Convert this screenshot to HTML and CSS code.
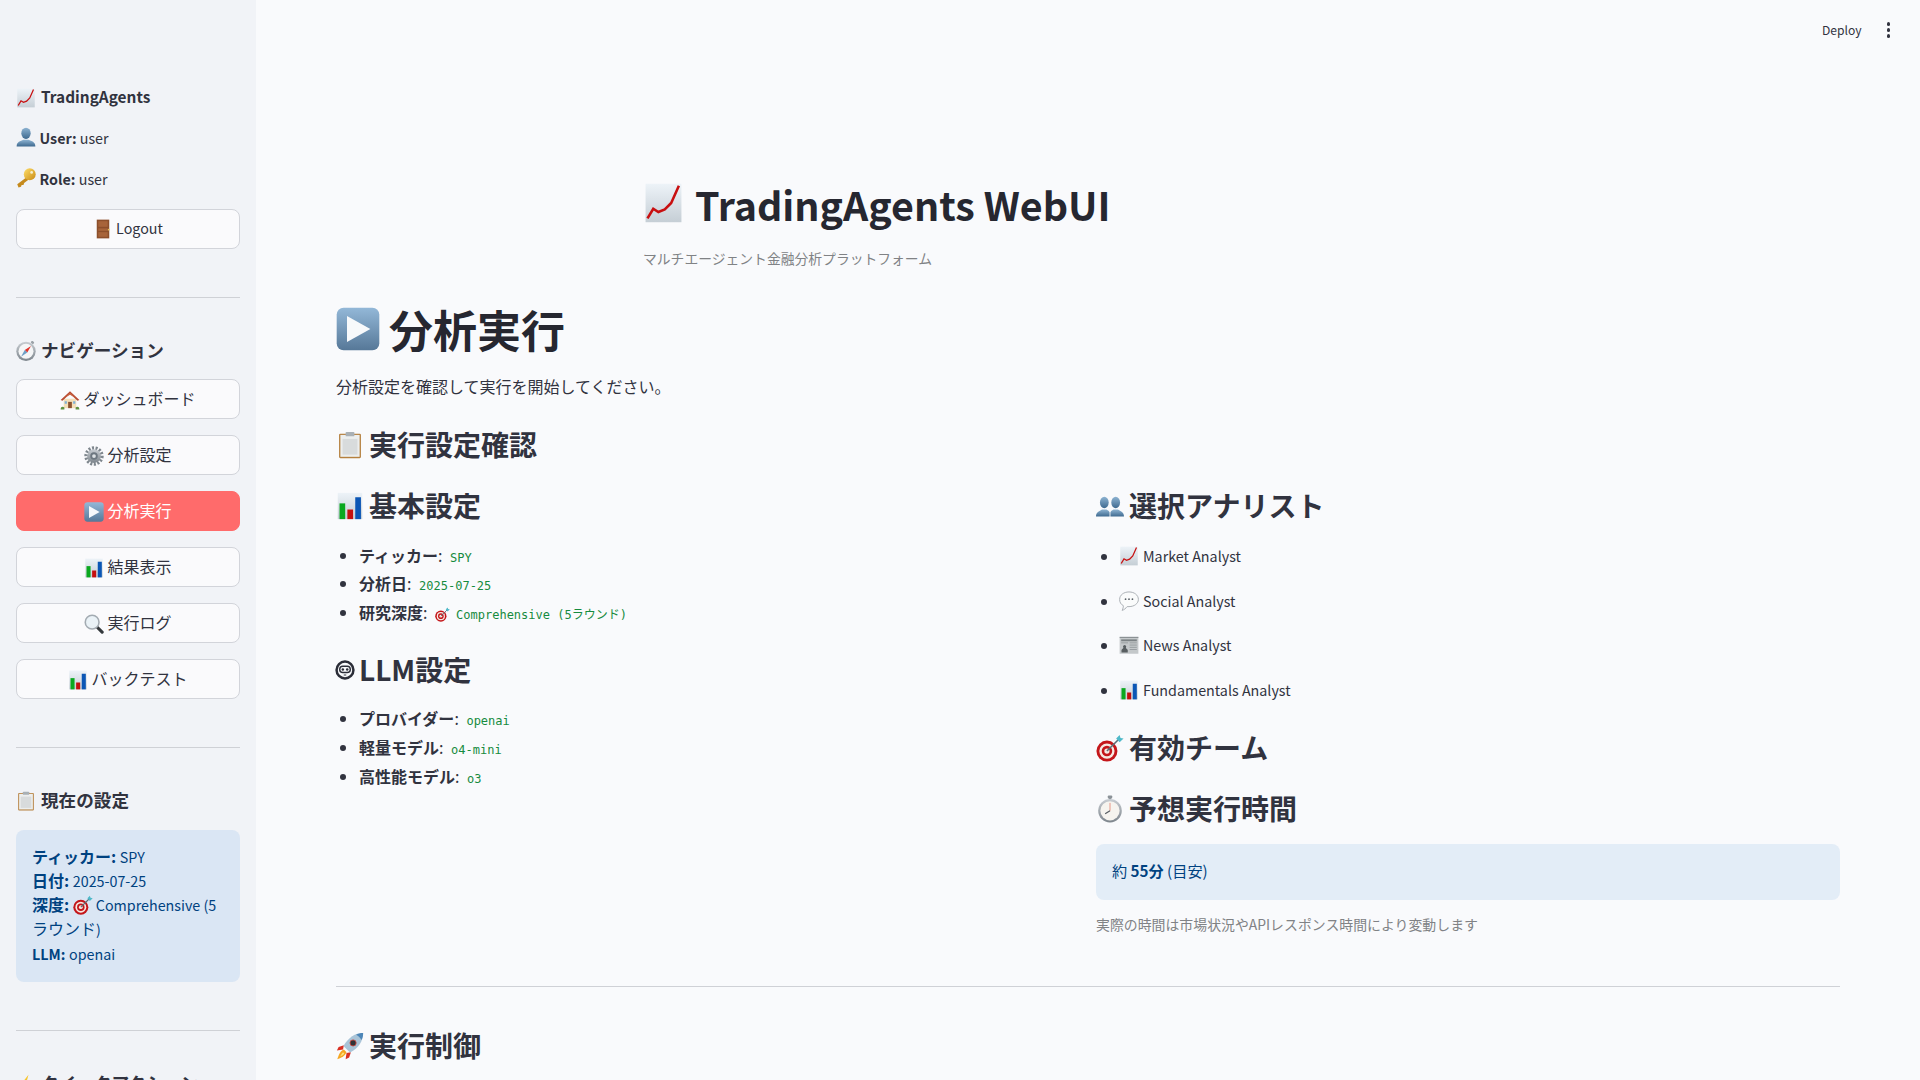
FILE: index.html
```html
<!doctype html>
<html lang="ja">
<head>
	<meta charset="UTF-8">
	<title>TradingAgents WebUI</title>
	<link rel="stylesheet" href="styles.css">
</head>
<body>
	<!-- emoji drawn once, reused with <use> -->
	<svg class="sprite" xmlns="http://www.w3.org/2000/svg">
		<defs>
			<linearGradient id="gPaper" x1="0" y1="0" x2="0" y2="1"><stop offset="0" stop-color="#edf3f8"/><stop offset="1" stop-color="#c5ced5"/></linearGradient>
			<linearGradient id="gBlue" x1="0" y1="0" x2="0" y2="1"><stop offset="0" stop-color="#93b8d8"/><stop offset="1" stop-color="#567898"/></linearGradient>
			<linearGradient id="gBust" x1="0" y1="0" x2="0" y2="1"><stop offset="0" stop-color="#8db3d2"/><stop offset="1" stop-color="#3f6a90"/></linearGradient>
			<linearGradient id="gGold" x1="0" y1="0" x2="1" y2="1"><stop offset="0" stop-color="#ffdf6a"/><stop offset="1" stop-color="#c98a14"/></linearGradient>
			<linearGradient id="gGrey" x1="0" y1="0" x2="0" y2="1"><stop offset="0" stop-color="#c9ced3"/><stop offset="1" stop-color="#7d858c"/></linearGradient>
			<symbol id="i-chart" viewBox="0 0 32 32">
				<rect x="2" y="1" width="28" height="30" fill="url(#gPaper)"/>
				<path d="M3.500 28 L8 20.500 L12 23 L17 21 L22 16 L28 2.500" fill="none" stroke="#c80f10" stroke-width="2"/>
			</symbol>
			<symbol id="i-bars" viewBox="0 0 32 32">
				<rect x="2" y="1" width="28" height="30" fill="url(#gPaper)"/>
				<rect x="4" y="13" width="6.500" height="18" fill="#0aa81f"/>
				<rect x="13" y="20" width="6.500" height="11" fill="#c4100f"/>
				<rect x="22" y="6" width="6.500" height="25" fill="#0b56b5"/>
			</symbol>
			<symbol id="i-user" viewBox="0 0 32 32">
				<ellipse cx="16" cy="10" rx="7.500" ry="9" fill="url(#gBust)"/>
				<path d="M1 31 C1 24 7 22.500 12 20.500 L20 20.500 C25 22.500 31 24 31 31 Z" fill="url(#gBust)"/>
			</symbol>
			<symbol id="i-users" viewBox="0 0 32 32">
				<ellipse cx="9.500" cy="12" rx="5" ry="6.500" fill="url(#gBust)"/>
				<path d="M0 28 C0 23 4 22 7 20 L12 20 C14 21 15 22 15.500 23 L15.500 28 Z" fill="url(#gBust)"/>
				<ellipse cx="22.500" cy="12" rx="5" ry="6.500" fill="url(#gBust)"/>
				<path d="M32 28 C32 23 28 22 25 20 L20 20 C18 21 17 22 16.500 23 L16.500 28 Z" fill="url(#gBust)"/>
			</symbol>
			<symbol id="i-key" viewBox="0 0 32 32">
				<path d="M19 13 L2 26 L4 31 L8 30 L9 27 L12 27 L13 24 L22 17 Z" fill="#c58a1d"/>
				<circle cx="22" cy="10" r="9.500" fill="url(#gGold)"/>
				<circle cx="25" cy="7" r="2.200" fill="#f6f0d0"/>
			</symbol>
			<symbol id="i-door" viewBox="0 0 32 32">
				<rect x="6" y="1" width="20" height="30" fill="#8c4f2b"/>
				<rect x="8.500" y="3.500" width="15" height="9" fill="#a7643a"/>
				<rect x="8.500" y="15" width="15" height="4" fill="#a7643a"/>
				<rect x="8.500" y="21" width="15" height="7.500" fill="#a7643a"/>
				<circle cx="25" cy="17" r="1.400" fill="#e4bd55"/>
			</symbol>
			<symbol id="i-compass" viewBox="0 0 32 32">
				<circle cx="16" cy="16.500" r="15.500" fill="url(#gGrey)"/>
				<circle cx="16" cy="16.500" r="12" fill="#f5f6f7"/>
				<rect x="24" y="0" width="5" height="4" rx="1.500" fill="#9aa1a7" transform="rotate(40 26 2)"/>
				<path d="M24 8 L18 18.500 L14 14.500 Z" fill="#e0332b"/>
				<path d="M8 25 L14 14.500 L18 18.500 Z" fill="#6f9fc6"/>
			</symbol>
			<symbol id="i-house" viewBox="0 0 32 32">
				<rect x="6" y="14" width="20" height="15" fill="#f3dfb9"/>
				<path d="M1 16 L16 2 L31 16 L28 17 L16 6 L4 17 Z" fill="#b5482f"/>
				<path d="M5 14 L16 4 L27 14 L16 7.500 Z" fill="#c8613f"/>
				<rect x="13" y="19" width="6" height="10" fill="#8c5430"/>
				<rect x="7.500" y="18" width="3.500" height="4" fill="#7fb1d6"/>
				<rect x="21" y="18" width="3.500" height="4" fill="#7fb1d6"/>
				<path d="M1 31 C1 26 5 26 7 28 L7 31 Z M31 31 C31 26 27 26 25 28 L25 31 Z" fill="#5f9140"/>
			</symbol>
			<symbol id="i-gear" viewBox="0 0 32 32">
				<circle cx="16" cy="16" r="12.500" fill="none" stroke="#7f878e" stroke-width="6" stroke-dasharray="3.200 2.340"/>
				<circle cx="16" cy="16" r="11" fill="url(#gGrey)"/>
				<circle cx="16" cy="16" r="6" fill="#6d7780"/>
				<circle cx="16" cy="16" r="3" fill="#dde1e4"/>
			</symbol>
			<symbol id="i-play" viewBox="0 0 32 32">
				<rect x="0.500" y="0.500" width="31" height="31" rx="5" fill="url(#gBlue)"/>
				<path d="M8 6.500 L25 16 L8 25.500 Z" fill="#f7f9fb"/>
			</symbol>
			<symbol id="i-search" viewBox="0 0 32 32">
				<path d="M20 20 L29 29" stroke="#33383c" stroke-width="5" stroke-linecap="round"/>
				<circle cx="13" cy="13" r="11" fill="#eaf2f7" stroke="#a3abb2" stroke-width="2.500"/>
			</symbol>
			<symbol id="i-clip" viewBox="0 0 32 32">
				<rect x="3.500" y="3" width="25" height="28" rx="1.500" fill="#b5803f"/>
				<rect x="5" y="4.500" width="22" height="25" fill="#eceeee"/>
				<rect x="7.500" y="9" width="17" height="18" fill="#d8dbdc"/>
				<rect x="11" y="1" width="10" height="5" rx="1" fill="#a9b0b5"/>
			</symbol>
			<symbol id="i-target" viewBox="0 0 32 32">
				<circle cx="12.500" cy="19.500" r="12" fill="#c4161a"/>
				<circle cx="12.500" cy="19.500" r="8.700" fill="#f6e9e2"/>
				<circle cx="12.500" cy="19.500" r="6" fill="#c4161a"/>
				<circle cx="12.500" cy="19.500" r="3" fill="#f6e9e2"/>
				<path d="M12.500 19.500 L26 6" stroke="#5d6d76" stroke-width="1.800"/>
				<path d="M23 5 L27 1 L28 4.500 L31.500 5 L27 9.500 Z" fill="#4fb9c9"/>
			</symbol>
			<symbol id="i-speech" viewBox="0 0 32 32">
				<path d="M16 1.500 C24.500 1.500 31 6.500 31 13.500 C31 20 24.500 25 16 25 L13 25 C11 27.500 8.500 30 5 31 C6.500 28 7 26 7 23.500 C3 21.500 1 18 1 13.500 C1 6.500 7.500 1.500 16 1.500 Z" fill="#fafbfb" stroke="#a6acb1" stroke-width="1.500"/>
				<circle cx="10.500" cy="13" r="1.400" fill="#596066"/>
				<circle cx="16" cy="13" r="1.400" fill="#596066"/>
				<circle cx="21.500" cy="13" r="1.400" fill="#596066"/>
			</symbol>
			<symbol id="i-news" viewBox="0 0 32 32">
				<rect x="1" y="3" width="30" height="27" fill="#c4c8ca"/>
				<rect x="1" y="3" width="30" height="1.500" fill="#7f8588"/>
				<rect x="3.500" y="7" width="25" height="3" fill="#7c8285"/>
				<rect x="3.500" y="12" width="11" height="1.200" fill="#8b9194"/>
				<rect x="17" y="12" width="11.500" height="1.200" fill="#8b9194"/>
				<rect x="17" y="15.500" width="11.500" height="1.200" fill="#8b9194"/>
				<rect x="17" y="19" width="11.500" height="1.200" fill="#8b9194"/>
				<rect x="17" y="22.500" width="11.500" height="1.200" fill="#8b9194"/>
				<path d="M4 28 L4 24 C5 22 7 22 7 20 A2.500 2.500 0 1 1 11 20 C11 22 13 22 14 24 L14 28 Z" fill="#585e61"/>
			</symbol>
			<symbol id="i-watch" viewBox="0 0 32 32">
				<rect x="13.500" y="0.500" width="5" height="3.500" rx="1" fill="#8b9298"/>
				<rect x="15" y="3" width="2" height="3" fill="#8b9298"/>
				<circle cx="16" cy="18" r="13.500" fill="url(#gGrey)"/>
				<circle cx="16" cy="18" r="11" fill="#f6f4ef"/>
				<path d="M16 18 L16 9" stroke="#e58a78" stroke-width="1"/>
				<path d="M16 18 L10.500 21.500" stroke="#555b60" stroke-width="1.300"/>
			</symbol>
			<symbol id="i-rocket" viewBox="0 0 32 32">
				<path d="M9 15 L3 17 L1 21 L8 20 Z" fill="#d92f22"/>
				<path d="M17 23 L15 29 L11 31 L12 24 Z" fill="#d92f22"/>
				<path d="M9 20 C4 22 3 27 1.500 31 C5.500 29.500 10 28 12 23 Z" fill="#f6a623"/>
				<path d="M8 23 C6 25 5.500 27 4.500 28 C6 27 8 27 9.500 24.500 Z" fill="#fde27a"/>
				<path d="M31 1 C22 1 14 6 8.500 16 L16 23.500 C26 18 31 10 31 1 Z" fill="#a9c4d8"/>
				<path d="M31 1 C28 1 25 1.500 23 3 C25.500 4 28 6.500 29 9 C30.500 7 31 4 31 1 Z" fill="#4d86b8"/>
				<circle cx="19.500" cy="12.500" r="3.500" fill="#2f3338" stroke="#c8423a" stroke-width="1"/>
			</symbol>
			<symbol id="i-bolt" viewBox="0 0 32 32">
				<path d="M20 1 L7 18 L14 18 L10 31 L25 12 L17 12 Z" fill="#f7c52d"/>
			</symbol>
			<symbol id="i-bot" viewBox="0 0 32 32">
				<circle cx="16" cy="16" r="13.500" fill="none" stroke="#2b2d38" stroke-width="4"/>
				<rect x="7.500" y="10" width="17" height="10" rx="5" fill="none" stroke="#2b2d38" stroke-width="2.200"/>
				<circle cx="12.500" cy="15" r="2" fill="#2b2d38"/>
				<circle cx="19.500" cy="15" r="2" fill="#2b2d38"/>
				<path d="M14 24 L18 24" stroke="#2b2d38" stroke-width="1.500"/>
			</symbol>
		</defs>
	</svg>

	<aside class="sidebar">
		<h3 class="side_title"><svg class="emoji"><use href="#i-chart"/></svg><span class="lat">TradingAgents</span></h3>
		<p class="side_line"><svg class="emoji"><use href="#i-user"/></svg><strong>User:</strong> user</p>
		<p class="side_line"><svg class="emoji"><use href="#i-key"/></svg><strong>Role:</strong> user</p>
		<button class="btn logout"><svg class="emoji"><use href="#i-door"/></svg><span class="lat">Logout</span></button>
		<hr class="side_rule first">

		<h3 class="side_title"><svg class="emoji"><use href="#i-compass"/></svg>ナビゲーション</h3>
		<div class="nav">
			<button class="btn"><svg class="emoji"><use href="#i-house"/></svg>ダッシュボード</button>
			<button class="btn"><svg class="emoji"><use href="#i-gear"/></svg>分析設定</button>
			<button class="btn active"><svg class="emoji"><use href="#i-play"/></svg>分析実行</button>
			<button class="btn"><svg class="emoji"><use href="#i-bars"/></svg>結果表示</button>
			<button class="btn"><svg class="emoji"><use href="#i-search"/></svg>実行ログ</button>
			<button class="btn"><svg class="emoji"><use href="#i-bars"/></svg>バックテスト</button>
		</div>
		<hr class="side_rule">

		<h3 class="side_title"><svg class="emoji"><use href="#i-clip"/></svg>現在の設定</h3>
		<div class="side_info">
			<strong>ティッカー:</strong> <span class="lat">SPY</span><br>
			<strong>日付:</strong> <span class="lat">2025-07-25</span><br>
			<strong>深度:</strong> <svg class="emoji"><use href="#i-target"/></svg><span class="lat">Comprehensive (5</span> ラウンド<span class="lat">)</span><br>
			<strong class="lat">LLM:</strong> <span class="lat">openai</span>
		</div>
		<hr class="side_rule">

		<h3 class="side_title quick"><svg class="emoji"><use href="#i-bolt"/></svg>クイックアクション</h3>
	</aside>

	<main class="main">
		<div class="topbar">
			<span class="deploy">Deploy</span>
			<span class="dots"><i></i><i></i><i></i></span>
		</div>
		<div class="content">
			<div class="brand">
				<h1 class="brand_title"><svg class="emoji"><use href="#i-chart"/></svg>TradingAgents WebUI</h1>
				<p class="brand_sub">マルチエージェント金融分析プラットフォーム</p>
			</div>

			<h1 class="page_title"><svg class="emoji"><use href="#i-play"/></svg>分析実行</h1>
			<p class="lead">分析設定を確認して実行を開始してください。</p>
			<h2 class="sec first"><svg class="emoji"><use href="#i-clip"/></svg>実行設定確認</h2>

			<div class="cols">
				<div class="col">
					<h2 class="sec"><svg class="emoji"><use href="#i-bars"/></svg>基本設定</h2>
					<ul class="list">
						<li><strong>ティッカー</strong>: <code>SPY</code></li>
						<li><strong>分析日</strong>: <code>2025-07-25</code></li>
						<li><strong>研究深度</strong>: <code><svg class="emoji"><use href="#i-target"/></svg>Comprehensive (5ラウンド)</code></li>
					</ul>
					<h2 class="sec llm"><svg class="emoji bot"><use href="#i-bot"/></svg>LLM設定</h2>
					<ul class="list second">
						<li><strong>プロバイダー</strong>: <code>openai</code></li>
						<li><strong>軽量モデル</strong>: <code>o4-mini</code></li>
						<li><strong>高性能モデル</strong>: <code>o3</code></li>
					</ul>
				</div>
				<div class="col">
					<h2 class="sec"><svg class="emoji"><use href="#i-users"/></svg>選択アナリスト</h2>
					<ul class="list wide">
						<li><svg class="emoji"><use href="#i-chart"/></svg>Market Analyst</li>
						<li><svg class="emoji"><use href="#i-speech"/></svg>Social Analyst</li>
						<li><svg class="emoji"><use href="#i-news"/></svg>News Analyst</li>
						<li><svg class="emoji"><use href="#i-bars"/></svg>Fundamentals Analyst</li>
					</ul>
					<h2 class="sec team"><svg class="emoji"><use href="#i-target"/></svg>有効チーム</h2>
					<h2 class="sec time"><svg class="emoji"><use href="#i-watch"/></svg>予想実行時間</h2>
					<div class="info"><span>約 <strong>55分</strong> (目安)</span></div>
					<p class="caption">実際の時間は市場状況やAPIレスポンス時間により変動します</p>
				</div>
			</div>

			<hr class="main_rule">
			<h2 class="sec"><svg class="emoji"><use href="#i-rocket"/></svg>実行制御</h2>
		</div>
	</main>
</body>
</html>
```

FILE: styles.css
```css
*{
	margin: 0;
	padding: 0;
	box-sizing: border-box;
}
html,body{
	height: 100%;
	overflow: hidden;
}
body{
	display: flex;
	background: #f9fafc;
	color: #31333f;
	font-family: "Noto Sans CJK JP", "Noto Sans", sans-serif;
	font-size: 16px;
}
strong{
	font-weight: 600;
}
.sprite{
	position: absolute;
	width: 0;
	height: 0;
}
.emoji{
	display: inline-block;
	width: 20px;
	height: 20px;
	margin-right: 4px;
	vertical-align: -4px;
}
.lat{
	font-size: 14.3px;
	line-height: 1;
}

/* sidebar */
.sidebar{
	flex: 0 0 256px;
	height: 100%;
	padding: 85px 16px 0;
	background: #f1f3f7;
	overflow: hidden;
}
.side_title{
	display: flex;
	align-items: center;
	height: 26px;
	padding-bottom: 3px;
	font-size: 17.6px;
	font-weight: 600;
	color: #31333f;
}
.side_title .emoji{
	margin-right: 5px;
	margin-top: 3px;
}
.side_title .lat{
	font-size: 15.4px;
}
.quick{
	margin-top: 34px;
}
.side_line{
	margin-top: 15px;
	padding-bottom: 3px;
	line-height: 23px;
	font-size: 14.3px;
}
.side_line .emoji{
	margin-top: -3px;
	margin-right: 3.5px;
	vertical-align: -3px;
}
.btn{
	display: block;
	width: 100%;
	height: 40px;
	padding-bottom: 3px;
	background: #fafafc;
	border: 1px solid #d2d4da;
	border-radius: 8px;
	color: #31333f;
	font-family: inherit;
	font-size: 16px;
}
.btn .emoji{
	margin-right: 3px;
	vertical-align: -5px;
}
.logout{
	margin-top: 16px;
	padding-bottom: 5px;
}
.btn.active{
	background: #ff6b6b;
	border-color: #ff6b6b;
	color: #fff;
}
.nav{
	display: flex;
	flex-direction: column;
	gap: 16px;
	margin-top: 15px;
}
.side_rule{
	height: 1px;
	margin: 48px 0 40px;
	border: 0;
	background: #cfd1d6;
}
.side_info{
	margin-top: 16px;
	padding: 13.5px 16px 16.9px;
	background: #dae6f4;
	border-radius: 8px;
	color: #004280;
	font-size: 16px;
	line-height: 24.32px;
}
.side_info .emoji{
	margin-right: 3px;
}

/* main */
.main{
	flex: 1;
	min-width: 0;
	height: 100%;
	overflow: hidden;
}
.topbar{
	display: flex;
	justify-content: flex-end;
	align-items: center;
	gap: 25px;
	height: 60px;
	padding-right: 30px;
}
.deploy{
	padding-bottom: 2px;
	font-size: 12.1px;
}
.dots{
	display: flex;
	flex-direction: column;
	gap: 2.5px;
}
.dots i{
	display: block;
	width: 3.5px;
	height: 3.5px;
	border-radius: 50%;
	background: #31333f;
}
.content{
	padding: 0 80px;
}
.brand{
	padding: 115px 0 0 307px;
}
.brand_title{
	display: flex;
	align-items: center;
	height: 60px;
	padding-bottom: 4px;
	font-size: 39.4px;
	font-weight: 700;
	color: #262730;
}
.brand_title .emoji{
	width: 41px;
	height: 46px;
	margin-right: 11px;
}
.brand_sub{
	margin-top: 11.5px;
	font-size: 13.8px;
	line-height: 22px;
	color: #808285;
}
.page_title{
	display: flex;
	align-items: center;
	height: 60px;
	margin-top: 30.5px;
	font-size: 44px;
	font-weight: 700;
	color: #262730;
}
.page_title .emoji{
	width: 44px;
	height: 44px;
	margin-right: 9px;
}
.lead{
	margin-top: 14px;
	line-height: 26px;
}
.sec{
	display: flex;
	align-items: center;
	height: 40px;
	font-size: 28px;
	font-weight: 600;
}
.sec .emoji{
	width: 28px;
	height: 28px;
	margin-right: 5px;
	margin-top: 2px;
}
.sec.first{
	margin-top: 25px;
}
.cols{
	display: flex;
	gap: 16px;
	margin-top: 21px;
}
.col{
	flex: 1;
	min-width: 0;
}
.list{
	margin-top: 15.6px;
	padding-left: 23px;
	line-height: 28.8px;
}
.list.second{
	margin-top: 15.1px;
}
.list li{
	height: 28.8px;
}
.list code{
	margin-left: 4px;
	font-family: "DejaVu Sans Mono", "Noto Sans CJK JP", monospace;
	font-size: 12px;
	line-height: 1;
	color: #168b3e;
}
.list code .emoji{
	width: 15px;
	height: 15px;
	margin-right: 6px;
	vertical-align: -3px;
}
.sec.llm{
	margin-top: 22.1px;
}
.sec.llm .emoji.bot{
	width: 20px;
	height: 20px;
	margin-right: 4px;
	margin-left: -1px;
}
.list.wide{
	margin-top: 17px;
	font-size: 14.3px;
}
.list.wide li + li{
	margin-top: 15.9px;
}
.list.wide .emoji{
	margin-right: 4px;
}
.sec.team{
	margin-top: 22px;
}
.sec.time{
	margin-top: 21px;
}
.info{
	display: flex;
	align-items: center;
	height: 56px;
	margin-top: 16px;
	padding: 0 16px 4px;
	background: #e3edf7;
	border-radius: 8px;
	color: #004280;
	font-size: 15.2px;
}
.caption{
	margin-top: 13px;
	font-size: 13.9px;
	line-height: 22px;
	color: #808285;
}
.main_rule{
	height: 1px;
	margin: 51px 0 38px;
	border: 0;
	background: #cfd1d6;
}
```
